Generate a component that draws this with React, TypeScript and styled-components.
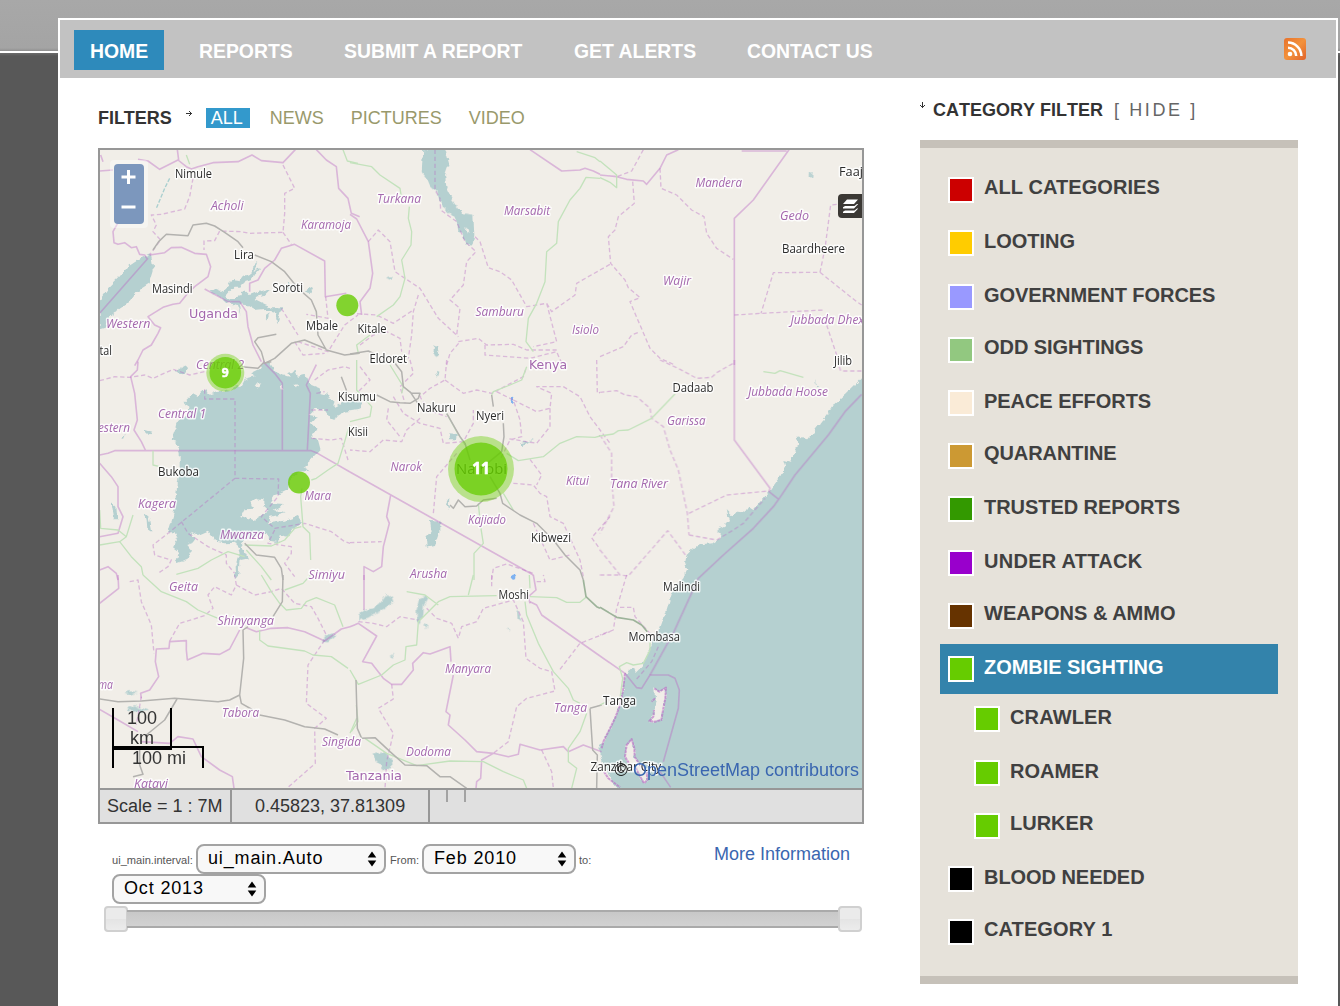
import React from "react";
import styled, { createGlobalStyle } from "styled-components";

const Global = createGlobalStyle`
  html, body { margin: 0; padding: 0; }
  body {
    height: 1006px;
    overflow: hidden;
    font-family: "Liberation Sans", Arial, sans-serif;
    background: linear-gradient(#a8a8a8 0, #a4a4a4 48px, #909090 51px, #fff 51px, #fff 53px, #6c6c6c 53px, #585858 56px, #585858 100%) no-repeat;
  }
  * { box-sizing: border-box; }
`;

const Page = styled.div`
  width: 1280px;
  height: 988px;
  margin: 18px 0 0 58px;
  background: #fff;
  border: 2px solid #fff;
`;
const Shell = styled.div`
  width: 1340px;
  height: 1006px;
  display: flex;
  overflow: hidden;
`;
const Nav = styled.nav`
  height: 58px;
  background: #c2c2c2;
  display: flex;
  align-items: flex-start;
  padding: 10px 30px 0 14px;
`;
const NavItem = styled.a<{ $active?: boolean; $w: number }>`
  width: ${p => p.$w}px;
  height: 40px;
  margin-right: ${p => (p.$active ? 19 : 20)}px;
  padding-left: 16px;
  line-height: 42px;
  font-size: 19.4px;
  font-weight: bold;
  white-space: nowrap;
  color: #fff;
  background: ${p => (p.$active ? "#2e8abb" : "transparent")};
`;
const Feed = styled.svg`
  margin-left: auto;
  margin-top: 8px;
`;
const Main = styled.main`
  display: flex;
  gap: 56px;
  padding-left: 38px;
`;
const Left = styled.section`
  width: 766px;
  padding-top: 30px;
`;
const Filters = styled.div`
  display: flex;
  height: 20px;
  line-height: 20px;
  font-size: 18px;
  margin-bottom: 20px;
  color: #99996b;
`;
const Strong = styled.strong<{ $wide?: boolean }>`
  color: #333;
  white-space: nowrap;
  font-kerning: ${p => (p.$wide ? "none" : "auto")};
`;
const Arrow = styled.svg<{ $l: number; $r: number; $t: number }>`
  flex: none;
  margin: ${p => p.$t}px ${p => p.$r}px 0 ${p => p.$l}px;
`;
const Filter = styled.a<{ $on?: boolean; $gap: number }>`
  margin-right: ${p => p.$gap}px;
  padding: ${p => (p.$on ? "0 7px 0 5px" : "0")};
  color: ${p => (p.$on ? "#fff" : "inherit")};
  background: ${p => (p.$on ? "#3399cc" : "transparent")};
`;
const MapFrame = styled.div`
  border: 2px solid #979797;
  height: 676px;
`;
const MapView = styled.div`
  position: relative;
  height: 638px;
  overflow: hidden;
  background: #f1eee8;
`;
const Canvas = styled.svg`
  display: block;
  text { paint-order: stroke; stroke-linejoin: round; }
`;
const Zoom = styled.div`
  position: absolute;
  left: 10px;
  top: 10px;
  width: 38px;
  height: 68px;
  padding: 4px;
  border-radius: 4px;
  background: rgba(255, 255, 255, 0.4);
`;
const ZoomInner = styled.div`
  height: 60px;
  border-radius: 4px;
  background: #7c97bd;
  display: flex;
  flex-direction: column;
`;
const ZoomBtn = styled.svg`
  width: 30px;
  height: 30px;
`;
const Layers = styled.svg`
  position: absolute;
  right: 0;
  top: 44px;
`;
const ScaleLine = styled.div`
  position: absolute;
  left: 12px;
  top: 558px;
  font-size: 18px;
  line-height: 20px;
  color: #333;
  text-align: center;
`;
const ScaleTop = styled.div`
  width: 60px;
  height: 42px;
  border: 2px solid #000;
  border-top: 0;
`;
const ScaleBottom = styled.div`
  width: 92px;
  height: 22px;
  margin-top: -4px;
  padding-left: 2px;
  border: 2px solid #000;
  border-bottom: 0;
`;
const Credit = styled.div`
  position: absolute;
  right: 3px;
  bottom: 8px;
  line-height: 20px;
  font-size: 18px;
  white-space: nowrap;
  color: #222;
`;
const Link = styled.a`
  color: #3a66b0;
`;
const Status = styled.div`
  height: 34px;
  display: flex;
  border-top: 2px solid #979797;
  background: #e0e0e0;
  color: #333;
  font-size: 18px;
  line-height: 32px;
`;
const Cell = styled.div<{ $w: number; $pad: number }>`
  width: ${p => p.$w}px;
  padding-left: ${p => p.$pad}px;
  border-right: 2px solid #979797;
  white-space: nowrap;
`;
const Tick = styled.div`
  width: 20px;
  height: 12px;
  margin-left: 16px;
  border: 2px solid #a3a3a3;
  border-width: 0 2px;
`;
const Controls = styled.div`
  display: flex;
  justify-content: space-between;
  padding: 20px 14px 0 14px;
  height: 82px;
`;
const Intervals = styled.div`
  display: flex;
  flex-wrap: wrap;
  width: 490px;
  align-content: flex-start;
`;
const Small = styled.label<{ $w: number }>`
  width: ${p => p.$w}px;
  font-size: 11.1px;
  line-height: 33px;
  height: 30px;
  color: #555;
  white-space: nowrap;
`;
const Select = styled.div<{ $w: number; $mr: number }>`
  width: ${p => p.$w}px;
  height: 30px;
  margin-right: ${p => p.$mr}px;
  padding: 0 7px 0 10px;
  border: 2px solid #a3a3a3;
  border-radius: 8px;
  background: #f8f8f8;
  display: flex;
  align-items: center;
  justify-content: space-between;
  font-size: 18px;
  line-height: 24px;
  letter-spacing: 0.85px;
  color: #000;
  span { margin-top: -2px; }
`;
const More = styled(Link)`
  font-size: 18px;
  line-height: 20px;
  white-space: nowrap;
`;
const Slider = styled.div`
  margin-left: 6px;
  width: 758px;
  height: 26px;
  display: flex;
  align-items: center;
`;
const Track = styled.div`
  flex: 1;
  height: 18px;
  margin: 0 -1px;
  border: 2px solid #aaa;
  border-width: 2px 0;
  background: linear-gradient(#c8c8c8, #d2d2d2);
`;
const Handle = styled.div`
  width: 24px;
  height: 26px;
  border: 2px solid #d0d0d0;
  border-radius: 4px;
  background: linear-gradient(#ebebeb 50%, #e4e4e4 50%, #ececec);
`;
const Side = styled.aside`
  width: 378px;
  padding-top: 22px;
`;
const SideTitle = styled.div`
  display: flex;
  height: 20px;
  line-height: 20px;
  font-size: 18px;
  margin-bottom: 20px;
`;
const Hide = styled.a`
  margin-left: 11px;
  letter-spacing: 2.6px;
  color: #666;
  white-space: pre;
`;
const Panel = styled.div`
  height: 844px;
  padding: 16px 20px 0;
  border: 8px solid #c6c1b9;
  border-width: 8px 0;
  background: #e6e2da;
`;
const Row = styled.div<{ $h: number; $active?: boolean; $child?: boolean }>`
  display: flex;
  height: ${p => p.$h}px;
  padding-left: ${p => (p.$child ? 34 : 8)}px;
  font-size: 20px;
  font-weight: bold;
  line-height: 46px;
  white-space: nowrap;
  color: ${p => (p.$active ? "#fff" : "#404040")};
  background: ${p => (p.$active ? "#3383ab" : "transparent")};
`;
const Name = styled.span<{ $track?: number }>`
  letter-spacing: ${p => p.$track ?? 0}px;
`;
const Swatch = styled.i<{ $c: string; $t: number }>`
  width: 26px;
  height: 26px;
  margin: ${p => p.$t}px 10px 0 0;
  border: 2px solid #fff;
  background: ${p => p.$c};
`;

type Category = { name: string; color: string; h: number; drop: number; child?: boolean; track?: number };
const categories: Category[] = [
  { name: "ALL CATEGORIES", color: "#cc0000", h: 54, drop: 13, track: 0.08 },
  { name: "LOOTING", color: "#ffcc00", h: 54, drop: 12 },
  { name: "GOVERNMENT FORCES", color: "#9999ff", h: 52, drop: 12, track: -0.05 },
  { name: "ODD SIGHTINGS", color: "#92c880", h: 54, drop: 13, track: -0.05 },
  { name: "PEACE EFFORTS", color: "#faebd7", h: 52, drop: 12, track: -0.05 },
  { name: "QUARANTINE", color: "#cc9933", h: 54, drop: 13, track: -0.08 },
  { name: "TRUSTED REPORTS", color: "#339900", h: 54, drop: 12, track: -0.05 },
  { name: "UNDER ATTACK", color: "#9900cc", h: 52, drop: 12, track: 0.27 },
  { name: "WEAPONS & AMMO", color: "#663300", h: 54, drop: 13 },
  { name: "ZOMBIE SIGHTING", color: "#66cc00", h: 50, drop: 12, track: -0.04 },
  { name: "CRAWLER", color: "#66cc00", h: 54, drop: 12, child: true, track: 0.14 },
  { name: "ROAMER", color: "#66cc00", h: 52, drop: 12, child: true },
  { name: "LURKER", color: "#66cc00", h: 54, drop: 13, child: true },
  { name: "BLOOD NEEDED", color: "#000", h: 52, drop: 12, track: -0.05 },
  { name: "CATEGORY 1", color: "#000", h: 54, drop: 13, track: 0.1 },
];

/* Map geometry. Each tile has its own origin and is drawn at a third of its unit size. */
type Tile = { x: number; y: number; shapes: [string, string][] };

const water: Tile[] = [
  { x: 98, y: 145, shapes: [
    ["w", "M158,325 L120,345 90,365 60,400 30,430 5,465 5,550 20,545 40,510 90,475 115,440 155,415 167,375Z"],
    ["w", "M335,440 L350,430 375,440 390,425 400,405 425,408 435,395 460,390 462,365 478,350 470,375 488,370 470,390 465,405 440,410 430,425 410,425 395,440 385,452 400,462 420,455 430,440 445,440 455,450 480,440 500,435 520,430 500,450 478,455 470,465 500,480 525,490 550,490 545,510 538,535 530,500 500,492 470,495 445,480 425,478 430,510 420,480 385,475 365,455Z"],
    ["w", "M570,410 L590,420 570,435Z M620,440 L640,430 650,425 640,445Z M500,515 L515,505 508,525Z"],
  ]},
  { x: 350, y: 145, shapes: [
    ["w", "M220,10 L215,80 230,100 240,125 268,150 275,185 300,205 320,225 325,255 340,270 345,298 368,298 373,270 370,212 340,208 322,185 305,160 290,130 285,90 297,55 285,10Z"],
    ["l", "M348,252 L354,248 358,260 350,265Z"],
    ["w", "M252,605 L262,608 270,625 262,640 250,630Z M108,398 L126,392 120,404Z"],
  ]},
  { x: 600, y: 145, shapes: [["w", "M630,84 L638,82 636,94 629,94Z"]] },
  { x: 98, y: 360, shapes: [
    ["w", "M260,125 L285,100 300,108 320,90 340,102 360,95 390,95 410,80 432,75 440,60 470,52 460,40 490,25 500,5 515,8 530,30 550,45 575,50 570,35 592,30 600,50 620,45 640,75 665,85 668,100 690,105 712,140 740,125 785,120 785,150 740,155 715,170 700,180 680,150 650,150 635,165 660,170 640,190 655,210 640,235 660,240 668,270 640,300 615,320 638,333 600,335 575,360 570,390 550,400 530,405 515,430 558,432 530,450 560,460 520,470 510,490 560,482 600,468 612,490 590,505 570,530 545,525 540,550 515,545 510,520 490,525 440,540 425,560 440,575 450,595 425,600 420,650 412,660 410,620 425,580 415,548 380,550 355,545 330,512 300,525 280,515 290,545 265,555 282,575 265,600 235,610 245,580 225,565 240,540 230,520 210,520 225,470 235,400 245,330 245,280 235,245 220,240 235,200 240,180 270,165 275,145Z"],
    ["l", "M430,468 L440,448 468,446 460,425 475,415 500,418 498,438 512,450 490,468 470,480 445,474Z M470,75 L490,70 478,85Z M545,75 L560,90 548,88Z M590,70 L602,78 592,85Z"],
    ["w", "M230,35 L255,20 275,18 260,38 238,42Z M140,460 L152,470 160,515 148,508 146,480Z M40,425 L55,440 58,480 48,470Z M135,208 L160,215 150,222Z M65,235 L80,225 75,237Z"],
  ]},
  { x: 350, y: 360, shapes: [
    ["w", "M240,480 L268,482 268,515 255,555 230,560 228,535 245,515Z M298,220 L320,222 318,238 300,238Z M0,128 L30,130 35,145 0,152Z M258,35 L268,40 264,55Z M510,250 L552,240 520,258Z M288,430 L298,410 296,450Z"],
    ["b", "M480,118a6,5 0 1 0 10,0a6,5 0 1 0 -10,0Z M485,650a7,6 0 1 0 14,0a7,6 0 1 0 -14,0Z"],
  ]},
  { x: 600, y: 360, shapes: [
    ["w", "M792,45 L765,75 740,100 700,135 685,160 650,205 625,238 605,235 590,225 595,255 570,305 550,300 556,320 540,350 510,392 490,415 460,450 445,440 435,455 415,452 400,470 380,450 390,480 370,500 350,510 370,520 365,535 340,550 300,553 275,570 260,585 255,610 262,630 250,655 215,700 198,755 180,805 155,850 140,885 125,920 110,935 95,925 75,940 70,985 62,1030 45,1075 25,1115 10,1145 -5,1160 8,1205 25,1250 60,1290 792,1290Z"],
    ["w", "M645,60 L652,76 662,78 650,82Z"],
  ]},
  { x: 98, y: 575, shapes: [["w", "M80,355 L95,348 120,352 100,358Z M90,400 L110,390 130,400 155,408 130,410 100,410Z M680,185 L700,175 712,182 690,202 675,200Z"]] },
  { x: 350, y: 575, shapes: [
    ["w", "M25,120 L40,105 70,100 90,85 112,57 125,65 130,80 105,100 80,112 55,128 30,135 25,145Z M200,140 L200,100 210,70 225,63 232,72 222,90 220,120 208,145Z M68,535 L95,530 125,548 128,578 105,585 78,560Z M500,105 L505,100 507,120 515,140 503,132Z M220,145 L230,148 226,160Z M120,245 L135,235 125,248Z M472,162 L480,162 478,170Z"],
    ["b", "M485,2 L495,-2 498,8 487,10Z"],
  ]},
  { x: 600, y: 575, shapes: [
    ["l", "M163,340 L178,350 198,338 196,370 190,400 184,435 165,440 148,438 160,425 162,405 170,385 165,370Z M80,510 L95,492 103,520 104,545 120,570 140,590 142,615 132,625 118,600 108,580 90,570 75,545Z"],
  ]},
];

const lines: Tile[] = [
  { x: 98, y: 145, shapes: [
    ["s", "M5,78 L45,75 M120,43 L150,48 185,73 240,45 265,65 280,72 300,65 345,53 420,50 462,30 490,47 555,53 592,14 M238,14 L242,45 M8,30 L15,50 M62,135 L52,160 60,195 70,215 45,260 48,293 60,298 80,293 100,308 115,305 125,328 140,330 148,343 M150,340 L5,505 M155,330 L200,323 220,308 250,307 290,325 325,328 338,365 330,395 290,425 265,450 245,475 225,478 195,487 150,515 170,540 188,548 180,565 160,600 135,615 120,645 110,662 M320,432 L390,470 425,470 445,500 450,545 465,600 490,650 M455,440 L455,415 480,405 500,370 530,345 550,310 590,298 680,348 682,455 745,445 M655,14 L685,45 715,65 722,130 750,160 760,205 785,215"],
    ["d", "M285,100 L275,155 260,192 190,208 160,210 175,240 165,260 188,285 155,330 M555,60 L575,100 590,130 560,145 560,205 555,262 455,265 430,260 365,258 350,287 318,288 318,315 M555,262 L580,298 M683,455 L690,520 625,508 M600,590 L690,620 740,540 780,510 M590,590 L615,630 680,625 M550,490 L575,530 600,570"],
    ["t", "M215,100 L200,130 175,190"],
    ["g", "M265,30 L275,58 M735,14 L748,48 780,55"],
    ["r", "M165,315 L182,290 205,268 270,272 285,240 325,235 350,243 380,262 420,290 435,308 M470,330 L520,350 560,380 600,430 640,465 655,500 660,570 685,615 740,630 785,625 M535,568 L480,578 470,590 490,620 500,655 530,640 580,595 620,585 685,612"],
  ]},
  { x: 350, y: 145, shapes: [
    ["s", "M0,208 L20,222 55,290 68,385 60,430 30,470 35,510 M540,14 L635,78 690,75 705,70 730,78 750,88"],
    ["d", "M255,14 L255,135 270,160 272,195 320,230 345,290 378,320 350,350 340,420 300,465 330,490 320,570 M55,290 L85,255 120,290 135,380 210,430 265,520 325,575 M375,275 L390,290 415,368 450,380 485,405 530,485 590,475 605,500 675,450 680,415 750,375 M590,475 L620,590 550,605 M205,450 L190,500 185,570 175,640 M0,505 L80,510 130,535 190,495 M325,590 L385,580 410,600 490,598 530,615 620,615 M290,660 L300,625 330,590 M30,600 L70,570 110,560 150,580 155,620 M405,600 L405,630 540,640 620,620 635,655"],
    ["g", "M0,53 L65,65 90,90 150,130 155,160 M178,185 L175,220 185,260 183,300 155,345 165,400 150,455 130,480 80,515 M680,20 L735,38 750,50 M750,100 L708,97 690,130 660,165 625,230 620,295 590,320 585,410 560,475 535,520 528,590 550,620 M25,625 L20,600 60,570"],
    ["r", "M0,627 L55,618 80,630"],
  ]},
  { x: 600, y: 145, shapes: [
    ["s", "M0,90 L50,95 80,103 130,108 140,118 180,70 200,30 235,14 M425,18 L560,18 M567,14 L460,165 403,220 403,660"],
    ["d", "M130,14 L95,78 50,95 M180,70 L183,130 230,150 275,195 312,215 320,265 350,310 400,343 M98,110 L103,175 55,215 45,255 25,275 32,355 75,405 85,428 120,458 90,470 150,610 180,640 220,658 M0,375 L30,358 M0,635 L70,605 95,570 120,560 M710,178 L692,180 675,310 660,382 520,383 483,505 M403,510 L485,505 670,495 M660,382 L770,470 785,480 M680,540 L710,630"],
    ["g", "M0,48 L50,90 50,128 30,112 0,98"],
  ]},
  { x: 98, y: 360, shapes: [
    ["s", "M120,5 L118,30 98,50 110,100 118,180 108,210 130,245 142,270 M5,285 L30,280 50,272 640,272 655,278 756,336 M495,5 L530,40 553,70 553,270 M655,14 L625,75 637,100 628,270 M5,310 L40,350 60,380 60,440 75,470 60,520 5,530 M5,630 L30,620 55,640 60,660"],
    ["d", "M5,62 L50,50 95,52 140,45 165,55 225,28 275,45 320,35 M320,88 L320,117 411,117 411,355 210,520 165,555 170,585 220,600 210,620 180,640 M411,355 L542,357 540,410 490,470 530,505 620,490 700,515 740,545 756,550 M250,485 L270,520 330,560 385,585 385,610 410,640 M640,150 L690,150 M640,235 L700,240 730,235 750,300 M655,100 L680,95 M650,60 L690,30 740,20 756,25 M530,510 L510,550 580,560 580,580 560,610 590,650"],
    ["g", "M756,195 L750,210 740,245 720,310 690,330 655,355 640,360 M612,385 L608,410 615,500 635,520 638,600 M165,272 L165,315 185,320 M105,465 L85,530 65,545 5,555 M65,545 L100,590 130,620 135,645 M5,450 L8,505 60,510 85,530 M235,643 L300,625 340,600 390,575 440,590 M440,555 L520,558 560,540 590,505 610,500 M445,570 L490,620 520,660"],
    ["r", "M430,20 L480,25 495,10 520,5 M440,550 L475,585 530,592 550,625 555,660 M730,50 L745,90 745,105"],
  ]},
  { x: 350, y: 360, shapes: [
    ["s", "M0,336 L550,645 M122,405 L110,470 118,490 100,560 95,620 70,635 42,620 42,660"],
    ["d", "M30,20 L60,60 20,100 M180,0 L190,40 150,80 165,130 M290,0 L285,60 240,85 210,110 235,150 290,170 M285,60 L340,100 380,90 425,100 520,50 530,20 M210,175 L170,210 155,245 100,240 60,275 0,270 M130,110 L160,160 210,190 270,205 280,250 340,245 370,190 370,150 M440,95 L490,120 510,180 515,230 480,240 450,300 M490,120 L560,155 600,145 605,100 560,80 640,80 690,110 720,170 780,250 M740,0 L742,100 750,98 M600,145 L600,200 560,250 470,235 M320,280 L260,350 250,460 M490,370 L550,375 570,400 590,410 600,470 640,490 690,600 700,650 M540,298 L575,345 560,375 M0,548 L95,545 M550,490 L600,600 660,585 M425,660 L430,625 470,612 550,640 M780,470 L725,533 750,568 M115,145 L110,180 150,230"],
    ["g", "M120,15 L160,80 155,100 M530,20 L515,60 480,75 430,95 425,105 M290,160 L320,215 345,255 M750,228 L735,232 680,230 630,250 580,290 505,302 470,280 M385,430 L392,500 400,550 372,580 372,660 M460,400 L490,450 M20,0 L20,90 65,140 60,170 0,185"],
    ["r", "M135,10 L155,35 160,80 185,100 210,100 205,115 180,130 150,128 120,125 80,105 M180,95 L210,140 M290,160 L330,230 345,250 360,300 M425,105 L430,140 M460,190 L462,230 455,275 400,320 M420,350 L450,400 458,430 510,465 560,490 610,540 645,585 690,630 700,660 M300,435 L310,445 325,420 345,440 380,438 400,420 440,415"],
  ]},
  { x: 600, y: 360, shapes: [
    ["s", "M403,0 L403,240 510,385 507,395 536,418 M785,103 L735,155 685,225 585,345 536,418 520,440 460,505 370,585 295,655 222,815 150,945"],
    ["d", "M180,0 L240,28 290,55 335,52 350,38 403,8 M0,97 L50,92 75,105 110,110 150,145 155,175 190,200 210,270 235,330 262,460 267,525 M267,460 L380,405 507,393 M267,525 L350,540 400,510 430,490 495,415 M0,225 L35,280 35,360 42,440 0,520 M0,570 L60,645 85,648 203,512 260,590 M0,645 L60,645 M718,20 L722,33 785,33"],
    ["g", "M0,228 L40,222 55,212 85,210 155,175 225,102 M490,35 L525,40 540,32 610,52"],
  ]},
  { x: 98, y: 575, shapes: [
    ["s", "M60,0 L62,40 5,85 M265,225 L265,197 215,200 213,220 175,222 172,260 182,305 155,345 128,355 130,370 M265,225 L268,255 315,235 365,238 395,222 425,165 M445,158 L475,170 520,160 570,158 620,170 680,198 730,162 756,155 M5,403 L60,435 120,470 M130,500 L215,505 240,485 285,492 310,545 365,585 403,605 408,640"],
    ["d", "M95,20 L120,15 130,80 160,150 168,235 M215,198 L245,145 320,122 345,100 330,60 350,35 400,60 415,30 410,0 M415,30 L470,60 520,50 550,40 590,85 640,95 660,130 685,180 M680,195 L630,270 625,385 685,430 650,460 652,565 570,637 M130,365 L115,450"],
    ["g", "M135,0 L190,50 265,80 300,105 360,130 M490,0 L520,50 545,85 565,105 610,100 625,80 655,68 710,90 735,155 M638,0 L615,25 560,45 M485,165 L485,195 510,213 620,228 645,240 700,245 750,280 M775,390 L780,440 760,470"],
    ["r", "M555,0 L553,80 525,125 M450,155 L435,165 437,250 425,360 395,375 360,380 230,370 130,378 60,380 5,372 M425,360 L430,385 465,405 M485,420 L560,435 620,455 680,462 720,480 M237,372 L200,435 145,480 M125,520 L125,570 135,598 105,605"],
  ]},
  { x: 350, y: 575, shapes: [
    ["s", "M42,0 L42,105 M0,155 L25,145 80,183 38,260 65,265 100,310 125,328 155,328 190,285 188,265 220,233 240,237 300,215 303,260 M310,300 L288,410 300,420 295,450 345,495 380,530 430,535 475,545 505,538 510,508 570,525 640,515 655,530 700,510 755,530 M430,535 L395,555 392,610 380,620 378,640 M540,80 L560,90 575,120 750,243"],
    ["s", "M550,0 L558,45 535,65 540,85"],
    ["d", "M25,140 L70,145 110,155 150,125 205,135 M230,100 L260,130 305,145 325,190 335,155 380,140 400,100 490,75 520,140 528,250 570,280 605,290 615,348 530,370 500,395 475,500 430,535 M125,328 L130,372 85,400 130,475 110,560 105,640 M630,283 L690,205 780,170 M575,525 L605,590 610,640 M425,0 L425,40 M560,20 L585,20 580,0"],
    ["g", "M0,285 L25,328 95,300 130,270 165,255 168,215 200,210 205,140 265,80 300,65 440,62 M170,50 L225,60 265,90 M370,0 L355,60 M540,65 L620,68 650,82 690,82 710,65 M525,80 L530,120 565,205 610,290 655,340 670,375 690,385 M710,415 L690,470 655,520 655,560 680,580 665,640 M20,430 L0,475 M45,490 L110,535 200,572 300,558 400,560 460,590 520,615 530,640 M538,0 L540,40"],
    ["r", "M18,315 L22,460 35,490 75,488 120,530 165,570 230,572 270,605 300,605 350,640 M720,400 L728,525 742,540 740,640 M720,400 L755,390"],
    ["k", "M700,15 L708,65 740,95 750,100"],
  ]},
  { x: 600, y: 575, shapes: [
    ["s", "M0,243 L75,295 110,338 125,340 150,300 205,300 225,310 238,345 235,400 190,560 M180,590 L212,637"],
    ["c", "M163,340 L178,350 198,338 196,370 190,400 184,435 165,440 148,438 160,425 162,405 M165,370 L155,380 M80,510 L95,492 103,520 104,545 120,570 140,590 142,615 132,625 118,600 108,580 90,570 75,545Z M75,295 L70,340 62,385 45,430 25,470 10,500 5,520 M12,590 L25,610 60,637"],
    ["d", "M80,0 L50,100 40,165 0,180 M60,97 L100,97 105,125 150,175 M175,215 L155,260 105,318"],
    ["g", "M150,200 L150,225 130,265 100,270 80,263 58,275 68,310 60,370 M0,390 L20,380"],
    ["k", "M0,97 L50,127 100,135 125,150 142,170"],
  ]},
];

const shapeStyle: Record<string, React.SVGProps<SVGPathElement>> = {
  w: { fill: "#b5d0d0" },
  l: { fill: "#f1eee8" },
  b: { fill: "#7fb2f0" },
  s: { fill: "none", stroke: "#b968c4", strokeOpacity: 0.42, strokeWidth: 4.8 },
  c: { fill: "none", stroke: "#b968c4", strokeOpacity: 0.6, strokeWidth: 6, strokeDasharray: "9 2" },
  d: { fill: "none", stroke: "#b968c4", strokeOpacity: 0.4, strokeWidth: 4, strokeDasharray: "13 8" },
  t: { fill: "none", stroke: "#a9cfcf", strokeWidth: 4, strokeDasharray: "12 5" },
  g: { fill: "none", stroke: "#c3e2bc", strokeWidth: 4 },
  r: { fill: "none", stroke: "#b3b2af", strokeWidth: 4.5 },
  k: { fill: "none", stroke: "#9db39a", strokeWidth: 5 },
};

const Tiles = ({ tiles }: { tiles: Tile[] }) => (
  <>
    {tiles.map((t, i) => (
      <g key={i} transform={`translate(${t.x} ${t.y}) scale(0.33333)`} strokeLinejoin="round">
        {t.shapes.map(([k, d], j) => <path key={j} d={d} {...shapeStyle[k]} />)}
      </g>
    ))}
  </>
);

/* name, left, right, baseline */
type Label = [string, number, number, number];
const towns: Label[] = [
  ["Nimule", 175, 212, 177.5], ["Lira", 234, 254, 259], ["Masindi", 152, 192.5, 292.5], ["Soroti", 272.5, 303, 291.5],
  ["Mbale", 306, 338, 330], ["tal", 99.5, 112, 355], ["Kitale", 357.5, 386.5, 333], ["Eldoret", 369.5, 407, 363],
  ["Baardheere", 782, 845, 253], ["Faaj", 839, 863, 175.5], ["Jilib", 834, 852, 365], ["Bukoba", 158, 199, 475.5],
  ["Kisumu", 338, 376, 401], ["Kisii", 348, 368, 436], ["Nakuru", 417, 456, 411.5], ["Nyeri", 476, 504, 420],
  ["Kibwezi", 531, 571, 541.5], ["Dadaab", 672.5, 713.5, 391.5], ["Moshi", 498.5, 529, 599],
  ["Malindi", 663, 700, 590.5], ["Mombasa", 628.5, 680, 641], ["Tanga", 603, 636, 704.5], ["Zanzibar City", 590.5, 661, 770.5],
];
const regions: Label[] = [
  ["Acholi", 211, 243.5, 210], ["Karamoja", 301, 351, 228.5], ["Western", 106, 150.5, 328], ["Central 2", 196, 244, 369],
  ["Turkana", 377, 421, 202.5], ["Marsabit", 504, 550, 214.5], ["Samburu", 475.5, 524, 315.5], ["Isiolo", 572, 599, 333.5],
  ["Mandera", 695.5, 742, 186.5], ["Gedo", 780, 809, 219.5], ["Wajir", 663, 691, 285], ["Jubbada Dhex", 790.5, 864, 323.5],
  ["Central 1", 158, 206, 418], ["estern", 98, 130, 432], ["Kagera", 138, 176, 508], ["Mara", 304.5, 331, 500],
  ["Mwanza", 220, 264, 538.5], ["Narok", 390.5, 422, 471], ["Kitui", 566, 589, 485], ["Kajiado", 468, 506, 524],
  ["Arusha", 410, 447, 577.5], ["Simiyu", 308.5, 345, 578.5], ["Garissa", 667, 705.5, 424.5], ["Jubbada Hoose", 748, 828, 396],
  ["Tana River", 610, 668, 487.5], ["Geita", 169, 198, 591], ["Shinyanga", 217.5, 274, 625], ["Manyara", 445, 491, 672.5],
  ["Tanga", 554, 587, 712], ["Dodoma", 406, 451, 755.5], ["Singida", 322, 361, 745.5], ["Tabora", 222, 259, 716.5],
  ["Katavi", 134, 168, 788], ["ma", 98, 113, 689],
];
const countries: Label[] = [["Uganda", 189, 238, 318], ["Kenya", 529, 567, 368.5], ["Tanzania", 346, 402, 780]];

const Labels = ({ items, size, fill, italic, font, weight }: { items: Label[]; size: number; fill: string; italic?: boolean; font: string; weight?: number }) => (
  <g fontFamily={font} fontSize={size} fontWeight={weight} fill={fill} fontStyle={italic ? "italic" : "normal"} stroke="#fff" strokeOpacity={0.8} strokeWidth={3}>
    {items.map(([t, a, b, y]) => (
      <text key={t + a} x={a} y={y} textLength={b - a} lengthAdjust="spacingAndGlyphs">{t}</text>
    ))}
  </g>
);

const sans = '"Open Sans", "Noto Sans", sans-serif';

const MapCanvas = () => (
  <Canvas width="762" height="638" viewBox="100 150 762 638">
    <defs>
      <filter id="shore" filterUnits="userSpaceOnUse" x="80" y="130" width="800" height="680" colorInterpolationFilters="sRGB">
        <feTurbulence type="fractalNoise" baseFrequency="0.16" numOctaves="2" seed="4" result="n" />
        <feDisplacementMap in="SourceGraphic" in2="n" scale="6" xChannelSelector="R" yChannelSelector="G" />
      </filter>
    </defs>
    <g filter="url(#shore)"><Tiles tiles={water} /></g>
    <Tiles tiles={lines} />
    <Labels items={regions} size={12.2} weight={500} fill="#a468ae" italic font={sans} />
    <Labels items={towns} size={12.2} weight={500} fill="#2b2b2b" font={sans} />
    <Labels items={countries} size={13} fill="#a468ae" font={'"DejaVu Sans", sans-serif'} />
    <Labels items={[["Nairobi", 456, 507, 473.5]]} size={15} fill="#2b2b2b" font={sans} />
    <g fill="#66cc00">
      <circle cx="225.3" cy="372.7" r="19" fillOpacity="0.4" />
      <circle cx="225.3" cy="372.7" r="15.8" fillOpacity="0.75" />
      <circle cx="481" cy="469" r="33" fillOpacity="0.4" />
      <circle cx="481" cy="469" r="26.5" fillOpacity="0.75" />
      <circle cx="347.3" cy="305.3" r="11" fillOpacity="0.8" />
      <circle cx="299" cy="482.5" r="11" fillOpacity="0.8" />
    </g>
    <g fill="#fff" stroke="#fff" strokeWidth="0.6" fontWeight="bold" textAnchor="middle" fontFamily={sans}>
      <text x="225.3" y="377" fontSize="12">9</text>
      <text x="481" y="474" fontSize="15.5">11</text>
    </g>
  </Canvas>
);

const Stepper = () => (
  <svg width="10" height="16" viewBox="0 0 10 16"><path d="M5,0.5 L9.3,6.5 H0.7Z M5,15.5 L9.3,9.5 H0.7Z" fill="#000" /></svg>
);

export default function App() {
  return (
    <Shell>
      <Global />
      <Page>
        <Nav>
          <NavItem $active $w={90}>HOME</NavItem>
          <NavItem $w={125}>REPORTS</NavItem>
          <NavItem $w={210}>SUBMIT A REPORT</NavItem>
          <NavItem $w={153}>GET ALERTS</NavItem>
          <NavItem $w={160}>CONTACT US</NavItem>
          <Feed width="22" height="22" viewBox="0 0 22 22">
            <defs>
              <linearGradient id="rss" x1="0" y1="0" x2="1" y2="1">
                <stop offset="0" stopColor="#e8722c" /><stop offset="0.5" stopColor="#f3923c" /><stop offset="1" stopColor="#e0622a" />
              </linearGradient>
            </defs>
            <rect width="22" height="22" rx="3" fill="url(#rss)" />
            <circle cx="6" cy="16" r="2.3" fill="#fff" />
            <path d="M4,9.8 A8.2,8.2 0 0 1 12.2,18 M4,4.6 A13.4,13.4 0 0 1 17.4,18" fill="none" stroke="#fff" strokeWidth="2.5" />
          </Feed>
        </Nav>
        <Main>
          <Left>
            <Filters>
              <Strong>FILTERS</Strong>
              <Arrow $l={14} $r={14} $t={3} width="6" height="6" viewBox="0 0 6 6" shapeRendering="crispEdges">
                <path d="M0,2h6v1h-6z M3,0h1v1h-1z M4,1h1v1h-1z M4,3h1v1h-1z M3,4h1v1h-1z" fill="#333" />
              </Arrow>
              <Filter $on $gap={20}>ALL</Filter>
              <Filter $gap={27}>NEWS</Filter>
              <Filter $gap={27}>PICTURES</Filter>
              <Filter $gap={0}>VIDEO</Filter>
            </Filters>
            <MapFrame>
              <MapView>
                <MapCanvas />
                <Zoom>
                  <ZoomInner>
                    <ZoomBtn viewBox="0 0 30 30"><path d="M7.5,13h14 M14.5,6v14" stroke="#fff" strokeWidth="3" /></ZoomBtn>
                    <ZoomBtn viewBox="0 0 30 30"><path d="M7.5,13h14" stroke="#fff" strokeWidth="3" /></ZoomBtn>
                  </ZoomInner>
                </Zoom>
                <Layers width="24" height="24" viewBox="0 0 24 24">
                  <path d="M24,0H4a4,4 0 0 0 -4,4v16a4,4 0 0 0 4,4h20z" fill="#3b3834" />
                  <path d="M9,5.5h11l-4,4.5h-11z M5,13.2l2-1.2h9.5l2.5-2h1.2l-4.2,4.5h-11z M5,17.7l2-1.2h9.5l2.5-2h1.2l-4.2,4.5h-11z" fill="#fff" />
                </Layers>
                <ScaleLine>
                  <ScaleTop>100<br />km</ScaleTop>
                  <ScaleBottom>100 mi</ScaleBottom>
                </ScaleLine>
                <Credit>© <Link>OpenStreetMap contributors</Link></Credit>
              </MapView>
              <Status>
                <Cell $w={132} $pad={7}>Scale = 1 : 7M</Cell>
                <Cell $w={198} $pad={23}>0.45823, 37.81309</Cell>
                <Tick />
              </Status>
            </MapFrame>
            <Controls>
              <Intervals>
                <Small $w={84}>ui_main.interval:</Small>
                <Select $w={190} $mr={4}><span>ui_main.Auto</span><Stepper /></Select>
                <Small $w={32}>From:</Small>
                <Select $w={154} $mr={3}><span>Feb 2010</span><Stepper /></Select>
                <Small $w={16}>to:</Small>
                <Select $w={154} $mr={0}><span>Oct 2013</span><Stepper /></Select>
              </Intervals>
              <More>More Information</More>
            </Controls>
            <Slider><Handle /><Track /><Handle /></Slider>
          </Left>
          <Side>
            <SideTitle>
              <Arrow $l={0} $r={7} $t={2} width="6" height="6" viewBox="0 0 6 6" shapeRendering="crispEdges">
                <path d="M2,0h1v6h-1z M0,3h1v1h-1z M1,4h1v1h-1z M3,4h1v1h-1z M4,3h1v1h-1z" fill="#333" />
              </Arrow>
              <Strong $wide>CATEGORY FILTER</Strong>
              <Hide>[ HIDE ]</Hide>
            </SideTitle>
            <Panel>
              {categories.map(c => (
                <Row key={c.name} $h={c.h} $child={c.child} $active={c.name === "ZOMBIE SIGHTING"}>
                  <Swatch $c={c.color} $t={c.drop} />
                  <Name $track={c.track}>{c.name}</Name>
                </Row>
              ))}
            </Panel>
          </Side>
        </Main>
      </Page>
    </Shell>
  );
}
